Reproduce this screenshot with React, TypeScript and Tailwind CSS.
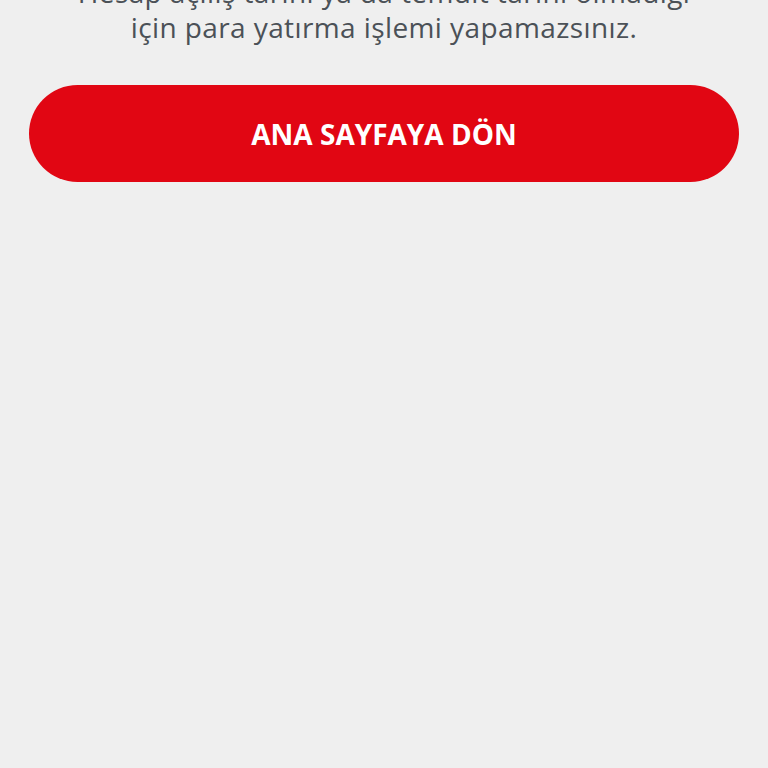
export default function App() {
  return (
    <div className="min-h-[768px] w-full overflow-hidden bg-[#efefef] font-['Open_Sans',sans-serif]">
      <div className="-mt-[25px] px-[29px]">
        <p className="text-center text-[28px] leading-[35px] tracking-[0.4px] text-[#4b5157]">
          Hesap açılış tarihi ya da temdit tarihi olmadığı
          <br />
          için para yatırma işlemi yapamazsınız.
        </p>
        <button className="mt-[40px] flex h-[97px] w-full items-center justify-center rounded-full bg-[#e10613] text-[28px] font-bold text-white">
          ANA SAYFAYA DÖN
        </button>
      </div>
    </div>
  );
}
